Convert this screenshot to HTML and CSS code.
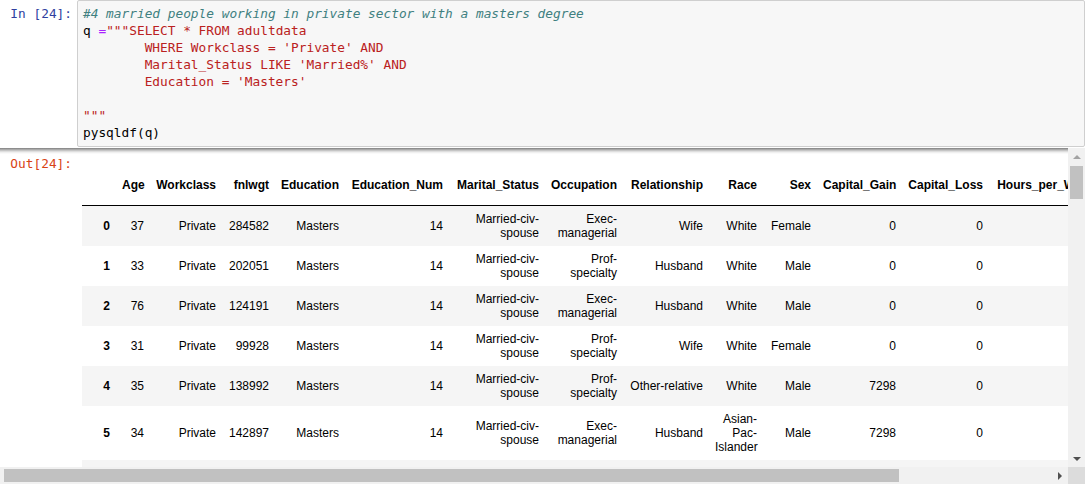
FILE: index.html
```html
<!DOCTYPE html>
<html>
<head>
<meta charset="utf-8">
<link rel="stylesheet" href="styles.css">
</head>
<body>
<div class="cell">
  <div class="input">
    <div class="prompt prompt-in">In&nbsp;[24]:</div>
    <div class="input-area">
<pre class="code"><span class="cm-comment">#4 married people working in private sector with a masters degree</span>
q <span class="cm-operator">=</span><span class="cm-string">"""SELECT * FROM adultdata
        WHERE Workclass = 'Private' AND
        Marital_Status LIKE 'Married%' AND
        Education = 'Masters'

"""</span>
pysqldf(q)</pre>
    </div>
  </div>
  <div class="output-scroll">
    <div class="viewport">
      <div class="output-area">
        <div class="prompt prompt-out">Out[24]:</div>
        <div class="subarea">
          <table class="dataframe">
            <thead>
              <tr>
                <th class="w-idx"></th>
                <th class="w-age">Age</th>
                <th class="w-workclass">Workclass</th>
                <th class="w-fnlwgt">fnlwgt</th>
                <th class="w-education">Education</th>
                <th class="w-edunum">Education_Num</th>
                <th class="w-marital">Marital_Status</th>
                <th class="w-occupation">Occupation</th>
                <th class="w-relationship">Relationship</th>
                <th class="w-race">Race</th>
                <th class="w-sex">Sex</th>
                <th class="w-gain">Capital_Gain</th>
                <th class="w-loss">Capital_Loss</th>
                <th class="w-hours">Hours_per_Week</th>
              </tr>
            </thead>
            <tbody>
              <tr><th>0</th><td>37</td><td>Private</td><td>284582</td><td>Masters</td><td>14</td><td>Married-civ-spouse</td><td>Exec-managerial</td><td>Wife</td><td>White</td><td>Female</td><td>0</td><td>0</td><td></td></tr>
              <tr><th>1</th><td>33</td><td>Private</td><td>202051</td><td>Masters</td><td>14</td><td>Married-civ-spouse</td><td>Prof-specialty</td><td>Husband</td><td>White</td><td>Male</td><td>0</td><td>0</td><td></td></tr>
              <tr><th>2</th><td>76</td><td>Private</td><td>124191</td><td>Masters</td><td>14</td><td>Married-civ-spouse</td><td>Exec-managerial</td><td>Husband</td><td>White</td><td>Male</td><td>0</td><td>0</td><td></td></tr>
              <tr><th>3</th><td>31</td><td>Private</td><td>99928</td><td>Masters</td><td>14</td><td>Married-civ-spouse</td><td>Prof-specialty</td><td>Wife</td><td>White</td><td>Female</td><td>0</td><td>0</td><td></td></tr>
              <tr><th>4</th><td>35</td><td>Private</td><td>138992</td><td>Masters</td><td>14</td><td>Married-civ-spouse</td><td>Prof-specialty</td><td>Other-relative</td><td>White</td><td>Male</td><td>7298</td><td>0</td><td></td></tr>
              <tr><th>5</th><td>34</td><td>Private</td><td>142897</td><td>Masters</td><td>14</td><td>Married-civ-spouse</td><td>Exec-managerial</td><td>Husband</td><td>Asian-Pac-Islander</td><td>Male</td><td>7298</td><td>0</td><td></td></tr>
              <tr class="row-cut"><th></th><td></td><td></td><td></td><td></td><td></td><td></td><td></td><td></td><td></td><td></td><td></td><td></td><td></td></tr>
            </tbody>
          </table>
        </div>
      </div>
    </div>
    <div class="vbar">
      <div class="sb-btn"><span class="arrow-up"></span></div>
      <div class="vthumb"></div>
      <div class="vtrack-rest"></div>
      <div class="sb-btn"><span class="arrow-down"></span></div>
    </div>
    <div class="hbar">
      <div class="hthumb"></div>
      <div class="sb-btn sb-right"><span class="arrow-right"></span></div>
    </div>
    <div class="corner"></div>
  </div>
</div>
</body>
</html>
```

FILE: styles.css
```css
body {
  margin: 0;
  background: #ffffff;
  font-family: "Liberation Sans", Arial, sans-serif;
}

.cell {
  width: 1085px;
}

.input {
  display: flex;
}

.prompt {
  flex: none;
  width: 77px;
  box-sizing: border-box;
  padding: 5px 5px 0 0;
  text-align: right;
  font-family: "DejaVu Sans Mono", "Liberation Mono", monospace;
  font-size: 12.8px;
  line-height: 17px;
  white-space: nowrap;
}

.prompt-in {
  color: #303f9f;
}

.prompt-out {
  color: #d84315;
  padding-top: 7px;
}

.input-area {
  flex: 1;
  min-width: 0;
  background: #f7f7f7;
  border: 1px solid #cfcfcf;
  border-radius: 2px;
  padding: 4px 0 5px;
}

.code {
  margin: 0;
  padding: 0 5px;
  font-family: "DejaVu Sans Mono", "Liberation Mono", monospace;
  font-size: 12.8px;
  line-height: 17px;
  color: #000000;
  white-space: pre;
}

.cm-comment {
  color: #408080;
  font-style: italic;
}

.cm-string {
  color: #ba2121;
}

.cm-operator {
  color: #aa22ff;
}

/* output area with scrollbars */
.output-scroll {
  margin-top: 1px;
  display: grid;
  grid-template-columns: 1fr 17px;
  grid-template-rows: 319px 17px;
}

.viewport {
  overflow: hidden;
  min-width: 0;
  background-image: linear-gradient(to bottom, rgba(0, 0, 0, 0.5) 0, rgba(0, 0, 0, 0.28) 2px, rgba(0, 0, 0, 0.08) 4px, rgba(0, 0, 0, 0) 6px);
  background-repeat: no-repeat;
  background-size: 100% 6px;
}

.output-area {
  display: flex;
}

.subarea {
  flex: 1;
  min-width: 0;
  padding: 17px 0 0 5px;
}

.dataframe {
  border-collapse: collapse;
  border-spacing: 0;
  table-layout: fixed;
  width: 1019px;
  font-size: 12px;
  color: #000000;
}

.dataframe th,
.dataframe td {
  padding: 6px;
  text-align: right;
  vertical-align: middle;
  line-height: 14px;
  white-space: normal;
}

.dataframe thead th {
  padding: 13px 6px;
  border-bottom: 1px solid #000000;
  font-weight: bold;
}

.dataframe tbody th {
  font-weight: bold;
}

.dataframe tbody tr:nth-child(odd) {
  background: #f5f5f5;
}

.dataframe .row-cut th,
.dataframe .row-cut td {
  height: 28px;
}

.w-idx { width: 22px; }
.w-age { width: 22px; }
.w-workclass { width: 60px; }
.w-fnlwgt { width: 41px; }
.w-education { width: 58px; }
.w-edunum { width: 92px; }
.w-marital { width: 84px; }
.w-occupation { width: 66px; }
.w-relationship { width: 74px; }
.w-race { width: 42px; }
.w-sex { width: 42px; }
.w-gain { width: 73px; }
.w-loss { width: 75px; }
.w-hours { width: 100px; }

/* scrollbars */
.vbar {
  background: #f1f1f1;
  display: flex;
  flex-direction: column;
}

.sb-btn {
  flex: none;
  width: 17px;
  height: 17px;
  display: flex;
  align-items: center;
  justify-content: center;
}

.vthumb {
  flex: none;
  height: 33px;
  margin: 1px 2px 0;
  background: #c1c1c1;
}

.vtrack-rest {
  flex: 1;
}

.hbar {
  background: #f1f1f1;
  display: flex;
  align-items: center;
}

.hthumb {
  flex: none;
  width: 895px;
  height: 13px;
  margin-left: 4px;
  background: #c1c1c1;
}

.sb-right {
  margin-left: auto;
}

.corner {
  background: #dcdcdc;
}

.arrow-up {
  width: 0;
  height: 0;
  border-left: 4px solid transparent;
  border-right: 4px solid transparent;
  border-bottom: 4px solid #a3a3a3;
}

.arrow-down {
  width: 0;
  height: 0;
  border-left: 4px solid transparent;
  border-right: 4px solid transparent;
  border-top: 4px solid #505050;
}

.arrow-right {
  width: 0;
  height: 0;
  border-top: 4px solid transparent;
  border-bottom: 4px solid transparent;
  border-left: 4px solid #505050;
}
```
